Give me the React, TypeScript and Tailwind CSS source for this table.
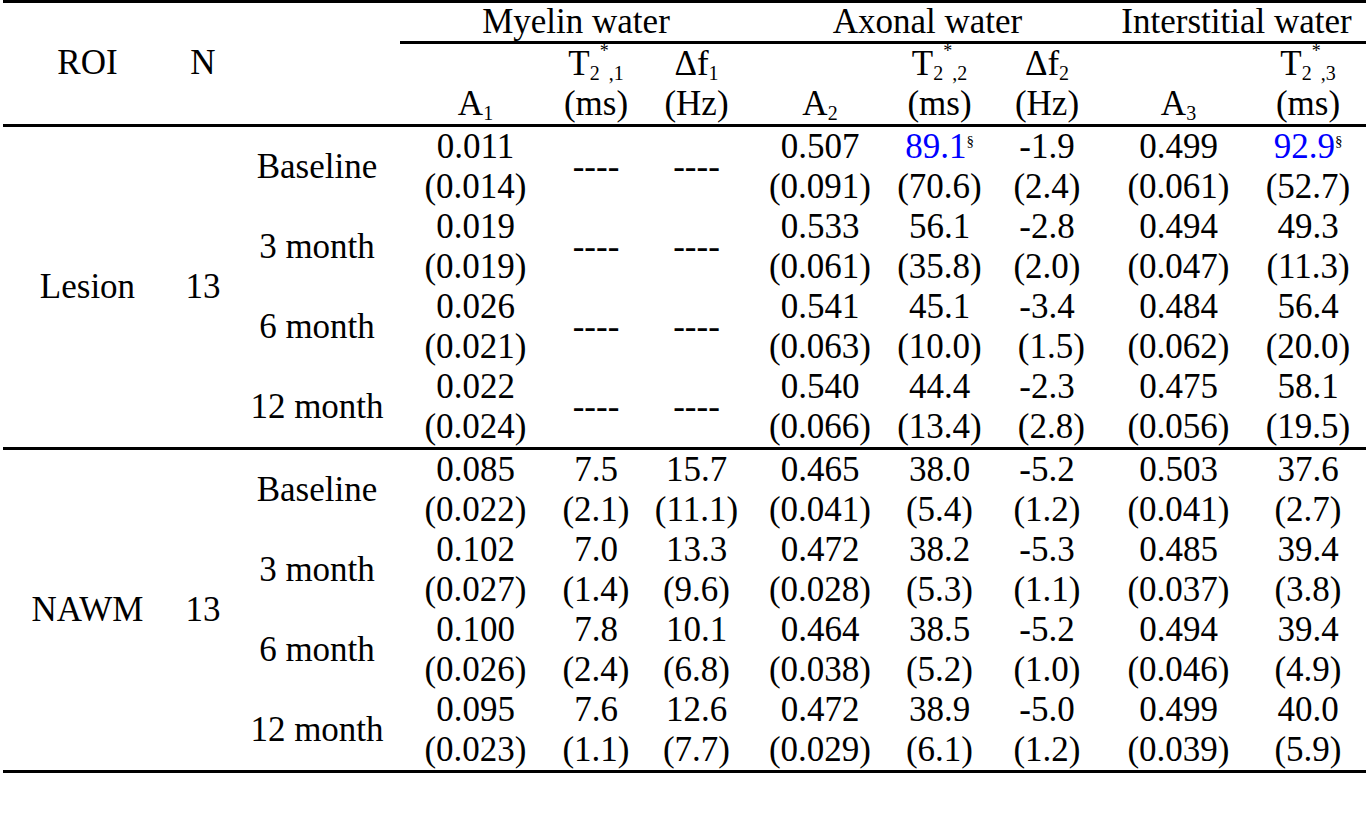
import React from 'react';

type Stat = { v: string; sd: string; mark?: boolean } | null;

interface TimeRow {
  time: string;
  cells: Stat[];
}

interface RoiGroup {
  roi: string;
  n: string;
  rows: TimeRow[];
}

const s = (v: string, sd: string, mark = false): Stat => ({ v, sd, mark });

const groups: RoiGroup[] = [
  {
    roi: 'Lesion',
    n: '13',
    rows: [
      {
        time: 'Baseline',
        cells: [s('0.011', '(0.014)'), null, null, s('0.507', '(0.091)'), s('89.1', '(70.6)', true), s('-1.9', '(2.4)'), s('0.499', '(0.061)'), s('92.9', '(52.7)', true)],
      },
      {
        time: '3 month',
        cells: [s('0.019', '(0.019)'), null, null, s('0.533', '(0.061)'), s('56.1', '(35.8)'), s('-2.8', '(2.0)'), s('0.494', '(0.047)'), s('49.3', '(11.3)')],
      },
      {
        time: '6 month',
        cells: [s('0.026', '(0.021)'), null, null, s('0.541', '(0.063)'), s('45.1', '(10.0)'), s('-3.4', '\u00a0(1.5)'), s('0.484', '(0.062)'), s('56.4', '(20.0)')],
      },
      {
        time: '12 month',
        cells: [s('0.022', '(0.024)'), null, null, s('0.540', '(0.066)'), s('44.4', '(13.4)'), s('-2.3', '\u00a0(2.8)'), s('0.475', '(0.056)'), s('58.1', '(19.5)')],
      },
    ],
  },
  {
    roi: 'NAWM',
    n: '13',
    rows: [
      {
        time: 'Baseline',
        cells: [s('0.085', '(0.022)'), s('7.5', '(2.1)'), s('15.7', '(11.1)'), s('0.465', '(0.041)'), s('38.0', '(5.4)'), s('-5.2', '(1.2)'), s('0.503', '(0.041)'), s('37.6', '(2.7)')],
      },
      {
        time: '3 month',
        cells: [s('0.102', '(0.027)'), s('7.0', '(1.4)'), s('13.3', '(9.6)'), s('0.472', '(0.028)'), s('38.2', '(5.3)'), s('-5.3', '(1.1)'), s('0.485', '(0.037)'), s('39.4', '(3.8)')],
      },
      {
        time: '6 month',
        cells: [s('0.100', '(0.026)'), s('7.8', '(2.4)'), s('10.1', '(6.8)'), s('0.464', '(0.038)'), s('38.5', '(5.2)'), s('-5.2', '(1.0)'), s('0.494', '(0.046)'), s('39.4', '(4.9)')],
      },
      {
        time: '12 month',
        cells: [s('0.095', '(0.023)'), s('7.6', '(1.1)'), s('12.6', '(7.7)'), s('0.472', '(0.029)'), s('38.9', '(6.1)'), s('-5.0', '(1.2)'), s('0.499', '(0.039)'), s('40.0', '(5.9)')],
      },
    ],
  },
];

const colWidths = ['w-[169px]', 'w-[62px]', 'w-[166px]', 'w-[147px]', 'w-[98px]', 'w-[103px]', 'w-[144px]', 'w-[95px]', 'w-[120px]', 'w-[143px]', 'w-[116px]'];

const line = 'border-black border-b-[3px]';

function Sub({ children }: { children: React.ReactNode }) {
  return <span className="relative top-[5px] text-[20px] leading-none">{children}</span>;
}

function Star() {
  return <span className="relative -top-[18px] text-[18px] leading-none">*</span>;
}

function T2({ k }: { k: string }) {
  return (
    <>
      T<Sub>2</Sub>
      <Star />
      <Sub>,{k}</Sub>
    </>
  );
}

function DF({ k }: { k: string }) {
  return (
    <>
      Δf<Sub>{k}</Sub>
    </>
  );
}

function TwoLine({ top, bottom }: { top: React.ReactNode; bottom: React.ReactNode }) {
  return (
    <>
      <div className="h-[40px] leading-[40px] whitespace-nowrap">{top}</div>
      <div className="h-[40px] leading-[40px] whitespace-nowrap">{bottom}</div>
    </>
  );
}

function ValueCell({ stat, last, first }: { stat: Stat; last: boolean; first: boolean }) {
  const edge = last ? line : '';
  const shift = first ? 'pl-[4px]' : '';
  if (!stat) {
    return <td className={`p-0 align-middle text-center ${edge}`}>----</td>;
  }
  return (
    <td className={`p-0 align-top text-center ${shift} ${edge}`}>
      <TwoLine
        top={
          stat.mark ? (
            <>
              <span className="text-[#0000ff]">{stat.v}</span>
              <span className="relative -top-[12px] text-[15px] leading-none">§</span>
            </>
          ) : (
            stat.v
          )
        }
        bottom={stat.sd}
      />
    </td>
  );
}

export default function App() {
  return (
    <div className="min-h-screen bg-white text-black font-['Liberation_Serif','Times_New_Roman',serif] text-[35px]">
      <table className="ml-[3px] w-[1363px] table-fixed border-separate border-spacing-0 border-t-[3px] border-black">
        <colgroup>
          {colWidths.map((w, i) => (
            <col key={i} className={w} />
          ))}
        </colgroup>
        <thead>
          <tr>
            <th rowSpan={2} className={`p-0 font-normal text-center align-middle ${line}`}>ROI</th>
            <th rowSpan={2} className={`p-0 font-normal text-center align-middle ${line}`}>N</th>
            <th rowSpan={2} className={`p-0 font-normal ${line}`} />
            <th colSpan={3} className={`p-0 pl-[4px] h-[38px] leading-[38px] font-normal text-center ${line}`}>Myelin water</th>
            <th colSpan={3} className={`p-0 leading-[38px] font-normal text-center ${line}`}>Axonal water</th>
            <th colSpan={2} className={`p-0 leading-[38px] font-normal text-center ${line}`}>Interstitial water</th>
          </tr>
          <tr>
            <th className={`p-0 pl-[4px] font-normal text-center align-bottom ${line}`}>
              <div className="h-[40px] leading-[40px]">A<Sub>1</Sub></div>
            </th>
            <th className={`p-0 font-normal text-center align-top ${line}`}>
              <TwoLine top={<T2 k="1" />} bottom="(ms)" />
            </th>
            <th className={`p-0 font-normal text-center align-top ${line}`}>
              <TwoLine top={<DF k="1" />} bottom="(Hz)" />
            </th>
            <th className={`p-0 font-normal text-center align-bottom ${line}`}>
              <div className="h-[40px] leading-[40px]">A<Sub>2</Sub></div>
            </th>
            <th className={`p-0 font-normal text-center align-top ${line}`}>
              <TwoLine top={<T2 k="2" />} bottom="(ms)" />
            </th>
            <th className={`p-0 font-normal text-center align-top ${line}`}>
              <TwoLine top={<DF k="2" />} bottom="(Hz)" />
            </th>
            <th className={`p-0 font-normal text-center align-bottom ${line}`}>
              <div className="h-[40px] leading-[40px]">A<Sub>3</Sub></div>
            </th>
            <th className={`p-0 font-normal text-center align-top ${line}`}>
              <TwoLine top={<T2 k="3" />} bottom="(ms)" />
            </th>
          </tr>
        </thead>
        <tbody>
          {groups.map((g) =>
            g.rows.map((r, i) => {
              const last = i === g.rows.length - 1;
              return (
                <tr key={`${g.roi}-${r.time}`}>
                  {i === 0 && (
                    <td rowSpan={g.rows.length} className={`p-0 text-center align-middle ${line}`}>
                      {g.roi}
                    </td>
                  )}
                  {i === 0 && (
                    <td rowSpan={g.rows.length} className={`p-0 text-center align-middle ${line}`}>
                      {g.n}
                    </td>
                  )}
                  <td className={`p-0 text-center align-middle whitespace-nowrap ${last ? line : ''}`}>{r.time}</td>
                  {r.cells.map((c, j) => (
                    <ValueCell key={j} stat={c} last={last} first={j === 0} />
                  ))}
                </tr>
              );
            })
          )}
        </tbody>
      </table>
    </div>
  );
}
